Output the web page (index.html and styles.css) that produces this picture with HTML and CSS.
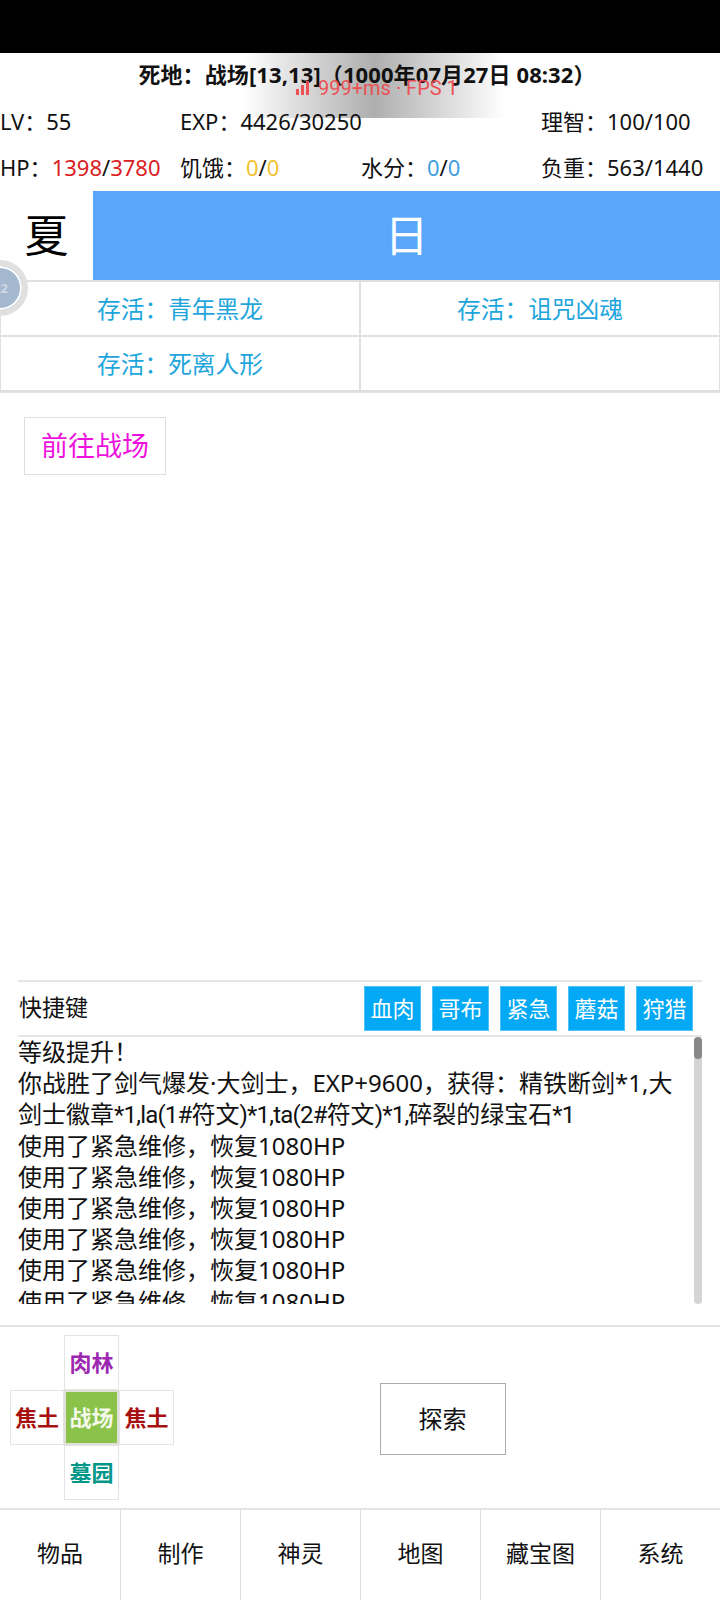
FILE: index.html
```html
<!DOCTYPE html>
<html lang="zh">
<head>
<meta charset="utf-8">
<title>死地</title>
<link rel="stylesheet" href="styles.css">
</head>
<body>
<div class="app">
  <div class="statusbar"></div>
  <div class="fps">
    <div class="fps-text">
      <svg class="fps-icon" width="14" height="14" viewBox="0 0 14 14"><rect x="0" y="8" width="3" height="6"/><rect x="5" y="4" width="3" height="10"/><rect x="10" y="0" width="3" height="14"/></svg>
      <span>999+ms · FPS 1</span>
    </div>
  </div>
  <div class="bubble"><span class="bubble-text">22</span></div>
  <header class="info">
    <div class="title">死地：战场[13,13]（1000年07月27日 08:32）</div>
    <div class="stats">
      <div>LV：55</div>
      <div>EXP：4426/30250</div>
      <div></div>
      <div>理智：100/100</div>
      <div>HP：<span class="red">1398</span>/<span class="red">3780</span></div>
      <div>饥饿：<span class="yellow">0</span>/<span class="yellow">0</span></div>
      <div>水分：<span class="blue">0</span>/<span class="blue">0</span></div>
      <div>负重：563/1440</div>
    </div>
  </header>
  <section class="season">
    <div class="season-name">夏</div>
    <div class="day-name">日</div>
  </section>
  <section class="units">
    <div class="unit">存活：青年黑龙</div>
    <div class="unit">存活：诅咒凶魂</div>
    <div class="unit">存活：死离人形</div>
    <div class="unit"></div>
  </section>
  <main class="main">
    <button class="goto">前往战场</button>
  </main>
  <section class="quick">
    <div class="quick-label">快捷键</div>
    <div class="quick-buttons">
      <button class="qb">血肉</button>
      <button class="qb">哥布</button>
      <button class="qb">紧急</button>
      <button class="qb">蘑菇</button>
      <button class="qb">狩猎</button>
    </div>
  </section>
  <section class="log">
    <div class="log-text">
      <div>等级提升！</div>
      <div>你战胜了剑气爆发·大剑士，EXP+9600，获得：精铁断剑*1,大剑士徽章<span class="narrow">*1,la(1#</span>符文<span class="narrow">)*1,ta(2#</span>符文<span class="narrow">)*1,</span>碎裂的绿宝石<span class="narrow">*1</span></div>
      <div>使用了紧急维修，恢复1080HP</div>
      <div>使用了紧急维修，恢复1080HP</div>
      <div>使用了紧急维修，恢复1080HP</div>
      <div>使用了紧急维修，恢复1080HP</div>
      <div>使用了紧急维修，恢复1080HP</div>
      <div>使用了紧急维修，恢复1080HP</div>
    </div>
    <div class="track"><div class="thumb"></div></div>
  </section>
  <section class="controls">
    <div class="cross">
      <div class="cell c-n purple">肉林</div>
      <div class="cell c-w crimson">焦土</div>
      <div class="cell c-c here">战场</div>
      <div class="cell c-e crimson">焦土</div>
      <div class="cell c-s teal">墓园</div>
    </div>
    <div class="explore-wrap"><button class="explore">探索</button></div>
  </section>
  <nav class="nav">
    <div class="nav-item">物品</div>
    <div class="nav-item">制作</div>
    <div class="nav-item">神灵</div>
    <div class="nav-item">地图</div>
    <div class="nav-item">藏宝图</div>
    <div class="nav-item">系统</div>
  </nav>
</div>
</body>
</html>
```
FILE: styles.css
```css
* { box-sizing: border-box; }
html, body { margin: 0; padding: 0; background: #fff; }
body { font-family: "Noto Sans", "Noto Sans CJK SC", sans-serif; color: #111; }
button { font-family: inherit; background: #fff; padding: 0; cursor: pointer; }
.app { position: relative; width: 720px; height: 1600px; display: flex; flex-direction: column; overflow: hidden; }
.statusbar { height: 53px; background: #000; flex: none; }

.fps { position: absolute; left: 243px; top: 53px; width: 262px; height: 65px; background: linear-gradient(90deg, rgba(170,170,170,0), rgba(170,170,170,.95) 50%, rgba(170,170,170,0)); }
.fps-text { position: absolute; left: 53px; top: 24px; display: flex; align-items: center; gap: 8px; color: #ee4b50; font-family: Roboto, sans-serif; font-size: 20px; line-height: 22px; white-space: nowrap; opacity: .95; z-index: 3; }
.fps-icon { fill: #ee4b50; }
.bubble { position: absolute; left: -28px; top: 260px; width: 56px; height: 56px; border-radius: 50%; background: #a4b8d0; border: 6px solid #e0e0e0; box-shadow: inset 0 0 0 2px #fff; display: flex; align-items: center; justify-content: flex-end; z-index: 3; }
.bubble-text { color: #cfd9e6; font-size: 13px; font-weight: 700; padding-right: 14px; }

.info { position: relative; height: 138px; flex: none; }
.title { height: 43px; line-height: 43px; padding-left: 14px; text-align: center; font-size: 22px; font-weight: 700; letter-spacing: .1px; white-space: nowrap; }
.stats { display: grid; grid-template-columns: 180px 181px 180px 179px; grid-auto-rows: 46px; font-size: 22px; line-height: 46px; white-space: nowrap; margin-top: 2px; }
.red { color: #d9201f; }
.yellow { color: #f2c230; }
.blue { color: #3e9ee0; }

.season { display: flex; height: 90px; flex: none; border-bottom: 1px solid #e0e0e0; }
.season-name { width: 93px; background: #fff; font-size: 44px; line-height: 88px; text-align: center; color: #000; }
.day-name { flex: 1; background: #5aa6fa; color: #fff; font-size: 44px; line-height: 88px; text-align: center; }

.units { display: grid; grid-template-columns: 1fr 1fr; grid-auto-rows: 55px; height: 112px; flex: none; border-top: 1px solid #e0e0e0; border-bottom: 1px solid #e4e4e4; background: #e0e0e0; gap: 0 2px; padding: 0 1px; }
.unit { background: #fff; color: #1ea6dc; font-size: 23.7px; line-height: 55px; text-align: center; border-bottom: 2px solid #e0e0e0; }

.main { flex: 1; padding: 24px 24px 0; }
.goto { width: 142px; height: 58px; border: 1px solid #ddd; color: #ee11dd; font-size: 27px; line-height: 56px; }

.quick { flex: none; height: 57px; margin: 0 18px; border-top: 2px solid #e6e6e6; border-bottom: 2px solid #e6e6e6; display: flex; align-items: center; justify-content: space-between; padding: 0 9px 0 1px; }
.quick-label { font-size: 23px; margin-top: -5px; }
.quick-buttons { display: flex; gap: 11px; }
.qb { width: 57px; height: 45px; border: 1px solid #4fc3f7; background: #03a9f4; color: #fff; font-size: 22px; line-height: 43px; }

.log { flex: none; height: 267px; margin: 0 18px; display: flex; overflow: hidden; }
.log-text { flex: 1; font-size: 24px; line-height: 31.2px; margin-top: -1px; overflow: hidden; color: #111; }
.narrow { font-family: Roboto, sans-serif; letter-spacing: -.8px; line-height: 1; }
.track { width: 8px; background: #d4d4d4; border-radius: 4px; flex: none; }
.thumb { height: 22px; background: #888; border-radius: 4px; }

.controls { flex: none; height: 183px; margin-top: 21px; border-top: 2px solid #e4e4e4; display: flex; }
.cross { margin: 8px 0 0 10px; display: grid; grid-template-columns: 54px 55px 55px; grid-template-rows: repeat(3, 55px); }
.cell { background: #fff; border: 1px solid #e4e4e4; font-size: 22px; font-weight: 700; text-align: center; line-height: 53px; }
.c-n { grid-column: 2; grid-row: 1; }
.c-w { grid-column: 1; grid-row: 2; }
.c-c { grid-column: 2; grid-row: 2; }
.c-e { grid-column: 3; grid-row: 2; }
.c-s { grid-column: 2; grid-row: 3; }
.purple { color: #9c27b0; }
.crimson { color: #a80f0f; }
.teal { color: #009688; }
.here { background: #8bc34a; color: #f4f9ec; border: 2px solid #e0e0d8; line-height: 51px; }
.explore-wrap { flex: 1; display: flex; justify-content: center; padding: 56px 9px 0 0; }
.explore { width: 126px; height: 72px; border: 1px solid #aaa; color: #111; font-size: 24px; padding-bottom: 4px; }

.nav { flex: none; height: 92px; display: grid; grid-template-columns: repeat(6, 1fr); border-top: 2px solid #e4e4e4; }
.nav-item { font-size: 23px; line-height: 86px; text-align: center; border-left: 1px solid #ddd; color: #111; }
.nav-item:first-child { border-left: 0; }
```
